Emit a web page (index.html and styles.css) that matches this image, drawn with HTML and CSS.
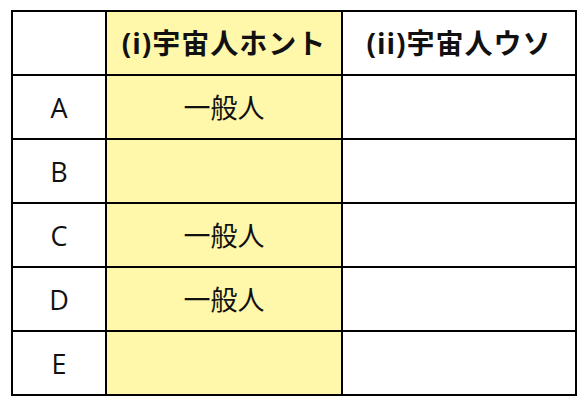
FILE: index.html
```html
<!DOCTYPE html>
<html lang="ja">
<head>
<meta charset="utf-8">
<link rel="stylesheet" href="styles.css">
</head>
<body>
<table class="grid">
  <tr class="head">
    <td class="c-label"></td>
    <td class="c-true hl">(i)宇宙人ホント</td>
    <td class="c-false">(ii)宇宙人ウソ</td>
  </tr>
  <tr><td class="c-label">A</td><td class="hl">一般人</td><td></td></tr>
  <tr><td class="c-label">B</td><td class="hl"></td><td></td></tr>
  <tr><td class="c-label">C</td><td class="hl">一般人</td><td></td></tr>
  <tr><td class="c-label">D</td><td class="hl">一般人</td><td></td></tr>
  <tr><td class="c-label">E</td><td class="hl"></td><td></td></tr>
</table>
</body>
</html>
```
FILE: styles.css
```css
html, body {
  margin: 0;
  padding: 0;
  background: #ffffff;
}
body {
  padding: 10px 0 0 11px;
  font-family: "Open Sans", "Noto Sans CJK JP", sans-serif;
  color: #111;
}
.grid {
  border-collapse: collapse;
  table-layout: fixed;
  width: 566px;
}
.grid td {
  border: 2px solid #000;
  height: 62px;
  padding: 0;
  text-align: center;
  vertical-align: middle;
  font-size: 27px;
  line-height: 1;
}
.grid td.c-label { width: 92px; }
.grid td.c-true { width: 234px; }
.grid .head td {
  font-weight: bold;
  font-size: 28px;
  letter-spacing: 1px;
}
.grid td.hl { background: #fff7aa; }
```
